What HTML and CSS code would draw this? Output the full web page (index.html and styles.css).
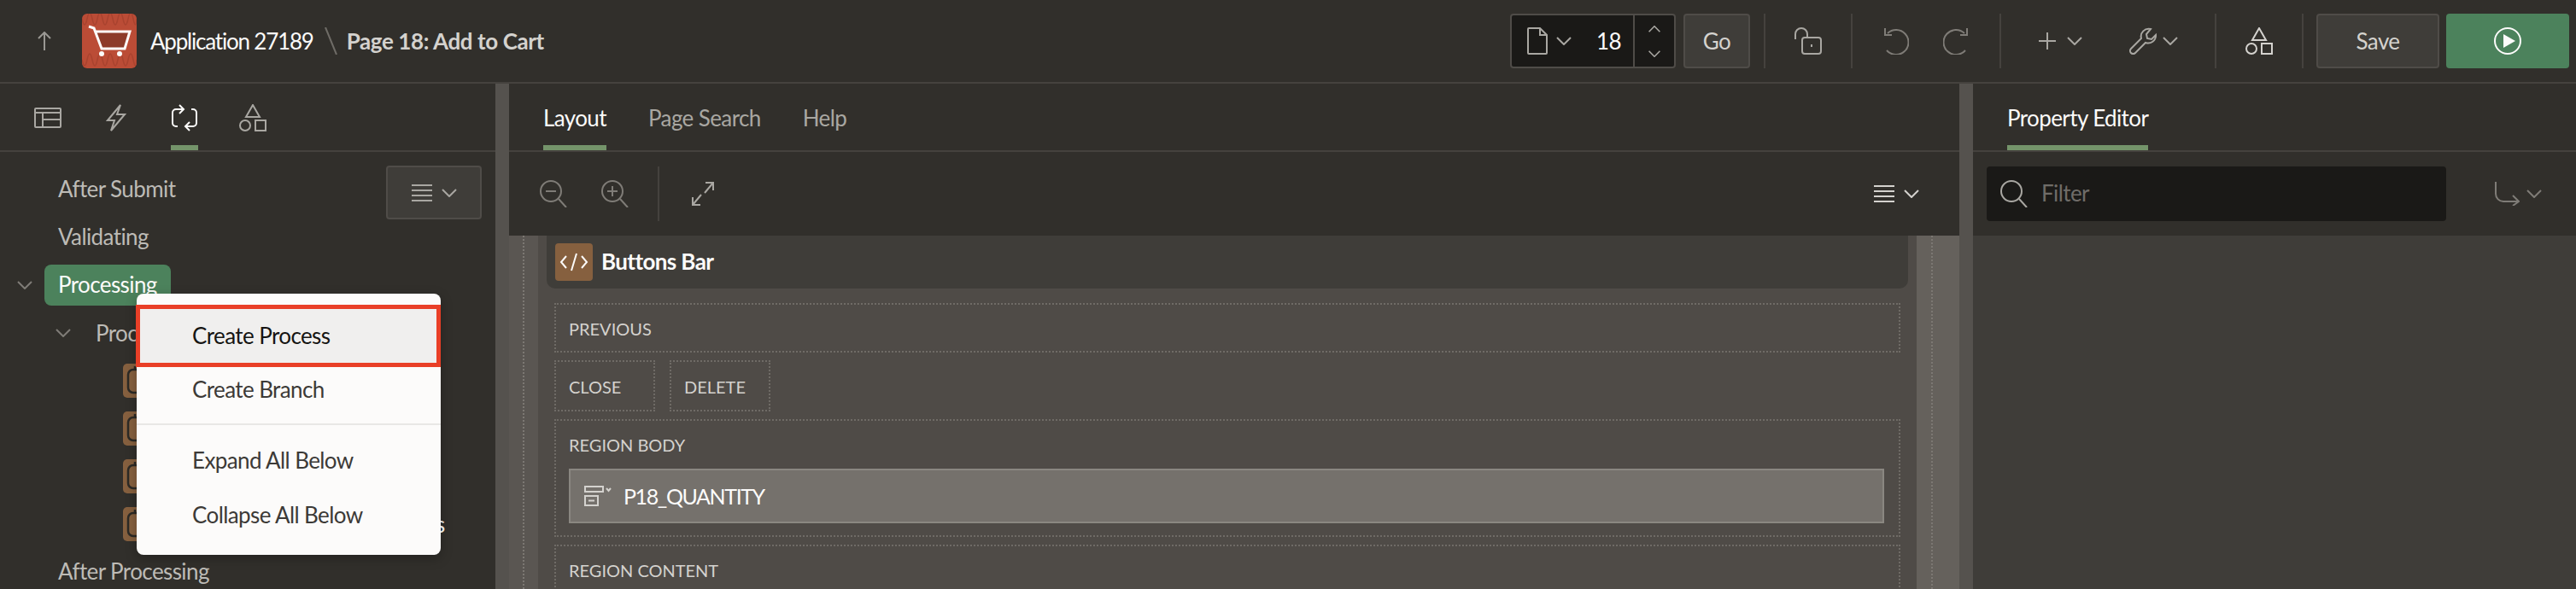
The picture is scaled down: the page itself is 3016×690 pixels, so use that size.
FILE: index.html
```html
<!DOCTYPE html>
<html lang="en">
<head>
    <meta charset="UTF-8">
    <title>Page Designer</title>
    <link rel="stylesheet" href="styles.css">
</head>
<body>
    <svg class="defs" width="0" height="0">
        <symbol id="chev" viewBox="0 0 18 10"><path d="M1 1l8 8 8-8"/></symbol>
        <symbol id="shapes" viewBox="0 0 32 32"><path d="M16 1l8 14H8z"/><circle cx="7" cy="25" r="6"/><rect x="19" y="19" width="12" height="12"/></symbol>
        <symbol id="lines" viewBox="0 0 24 20"><path d="M0 1h24M0 7h24M0 13h24M0 19h24"/></symbol>
        <symbol id="zoom" viewBox="0 0 32 32"><circle cx="13" cy="13" r="12"/><path d="M22 22l9 10"/></symbol>
    </svg>

    <header class="topbar">
        <svg class="back-arrow ic" width="16" height="22" viewBox="0 0 16 22"><path d="M8 22V1M1 8l7-7 7 7"/></svg>
        <div class="logo">
            <svg width="64" height="64" viewBox="0 0 64 64">
                <path class="logo-wave" d="M0 6q3 14 6 0t6 0 6 0 6 0 6 0 6 0 6 0 6 0 6 0 6 0 4 0M0 54q3 14 6 0t6 0 6 0 6 0 6 0 6 0 6 0 6 0 6 0 6 0 4 0"/>
                <path class="logo-fill" d="M16 21h40l-6 20H23z"/>
                <path class="logo-cart" d="M8 15l6 2 9 24h27l6-20H16"/>
                <circle class="logo-wheel" cx="23" cy="47" r="3"/>
                <circle class="logo-wheel" cx="44" cy="47" r="3"/>
            </svg>
        </div>
        <span class="app-name">Application 27189</span>
        <svg class="crumb-sep" width="15" height="32" viewBox="0 0 15 32"><path d="M1 0l13 32"/></svg>
        <span class="page-name">Page 18: Add to Cart</span>

        <div class="top-actions">
            <div class="page-box">
                <div class="page-pick">
                    <svg class="ic" width="24" height="32" viewBox="0 0 24 32"><path d="M1 2a1 1 0 0 1 1-1h13l8 8v21a1 1 0 0 1-1 1H2a1 1 0 0 1-1-1zM15 1v8h8"/></svg>
                    <svg class="ic chev-icon"><use href="#chev"/></svg>
                    <span class="page-num">18</span>
                </div>
                <div class="page-steps">
                    <svg class="ic step-icon" viewBox="0 0 18 10"><path d="M1 9l8-8 8 8"/></svg>
                    <svg class="ic step-icon"><use href="#chev"/></svg>
                </div>
            </div>
            <button class="btn go-btn">Go</button>
            <div class="tb-group lock-group">
                <svg class="ic" width="32" height="32" viewBox="0 0 32 32"><path d="M1 14V8a7 7 0 0 1 14 0v4"/><rect x="9" y="12" width="22" height="19" rx="3"/><path d="M20 20v3"/></svg>
            </div>
            <div class="tb-group history-group">
                <svg class="ic dim" width="30" height="32" viewBox="0 0 30 32"><path d="M5 7a14.500 14.500 0 1 1-1 20M2 1v8h8"/></svg>
                <svg class="ic dim" width="30" height="32" viewBox="0 0 30 32"><path d="M25 7a14.500 14.500 0 1 0 1 20M28 1v8h-8"/></svg>
            </div>
            <div class="tb-group tools-group">
                <div class="with-chev plus-pair">
                    <svg class="ic" width="20" height="20" viewBox="0 0 20 20"><path d="M10 0v20M0 10h20"/></svg>
                    <svg class="ic chev-icon"><use href="#chev"/></svg>
                </div>
                <div class="with-chev wrench-pair">
                    <svg class="ic" width="32" height="32" viewBox="0 0 32 32"><path d="M31 9l-5 5-5-1-1-5 5-6a9 9 0 0 0-11 11L2 25a3.500 3.500 0 0 0 5 5l12-12a9 9 0 0 0 12-9z"/></svg>
                    <svg class="ic chev-icon"><use href="#chev"/></svg>
                </div>
            </div>
            <div class="tb-group shapes-group">
                <svg class="ic" width="32" height="32"><use href="#shapes"/></svg>
            </div>
            <div class="tb-group save-group">
                <button class="btn save-btn">Save</button>
                <button class="run-btn">
                    <svg width="32" height="32" viewBox="0 0 32 32"><circle cx="16" cy="16" r="15"/><path class="play" d="M11 8l14 8-14 8z"/></svg>
                </button>
            </div>
        </div>
    </header>

    <main class="panes">
        <aside class="pane-left">
            <div class="tabs icon-tabs">
                <div class="tab icon-tab">
                    <svg class="ic" width="32" height="24" viewBox="0 0 32 24"><rect x="1" y="1" width="30" height="22" rx="1"/><path d="M1 6h30M10 6v17M10 14h21"/></svg>
                </div>
                <div class="tab icon-tab">
                    <svg class="ic" width="24" height="32" viewBox="0 0 24 32"><path d="M17 1L2 19h8L6 31l16-19h-9z"/></svg>
                </div>
                <div class="tab icon-tab is-active">
                    <svg class="ic bright" width="32" height="32" viewBox="0 0 32 32"><path d="M14 6H6a4 4 0 0 0-4 4v12a4 4 0 0 0 4 4h2M18 26h8a4 4 0 0 0 4-4V10a4 4 0 0 0-4-4h-2M10 1l5 5-5 5M22 21l-5 5 5 5"/></svg>
                </div>
                <div class="tab icon-tab shapes-tab">
                    <svg class="ic" width="32" height="32"><use href="#shapes"/></svg>
                </div>
            </div>

            <div class="tree-wrap">
                <button class="btn tree-menu-btn">
                    <svg class="ic" width="24" height="20"><use href="#lines"/></svg>
                    <svg class="ic chev-icon"><use href="#chev"/></svg>
                </button>
                <ul class="tree">
                    <li class="tree-row"><span class="node">After Submit</span></li>
                    <li class="tree-row"><span class="node">Validating</span></li>
                    <li class="tree-row">
                        <svg class="ic tree-chev chev-icon"><use href="#chev"/></svg>
                        <span class="node is-selected">Processing</span>
                    </li>
                    <li class="tree-row level-1">
                        <svg class="ic tree-chev chev-icon"><use href="#chev"/></svg>
                        <span class="node-plain">Processes</span>
                    </li>
                    <li class="tree-row level-2"><span class="chip"><svg width="40" height="40" viewBox="0 0 40 40"><rect x="6" y="7" width="28" height="27" rx="6"/><path d="M14 3v4"/></svg></span></li>
                    <li class="tree-row level-2"><span class="chip"><svg width="40" height="40" viewBox="0 0 40 40"><rect x="6" y="7" width="28" height="27" rx="6"/><path d="M14 3v4"/></svg></span></li>
                    <li class="tree-row level-2"><span class="chip"><svg width="40" height="40" viewBox="0 0 40 40"><rect x="6" y="7" width="28" height="27" rx="6"/><path d="M14 3v4"/></svg></span></li>
                    <li class="tree-row level-2"><span class="chip"><svg width="40" height="40" viewBox="0 0 40 40"><rect x="6" y="7" width="28" height="27" rx="6"/><path d="M14 3v4"/></svg></span><span class="peek">s</span></li>
                    <li class="tree-row"><span class="node">After Processing</span></li>
                </ul>
            </div>

            <div class="context-menu">
                <div class="menu-item is-current">Create Process</div>
                <div class="menu-item">Create Branch</div>
                <div class="menu-sep"></div>
                <div class="menu-item">Expand All Below</div>
                <div class="menu-item">Collapse All Below</div>
            </div>
        </aside>

        <section class="pane-center">
            <div class="tabs text-tabs">
                <div class="tab is-active">Layout</div>
                <div class="tab">Page Search</div>
                <div class="tab">Help</div>
            </div>
            <div class="layout-tools">
                <svg class="ic dim" width="32" height="32" viewBox="0 0 32 32"><use href="#zoom"/><path d="M7 13h12"/></svg>
                <svg class="ic dim" width="32" height="32" viewBox="0 0 32 32"><use href="#zoom"/><path d="M7 13h12M13 7v12"/></svg>
                <div class="tools-sep"></div>
                <svg class="ic" width="26" height="28" viewBox="0 0 26 28"><path d="M25 1L15 13M16 1h9v9M1 27l10-12M10 27H1v-9"/></svg>
                <div class="with-chev lines-pair">
                    <svg class="ic" width="24" height="20"><use href="#lines"/></svg>
                    <svg class="ic chev-icon"><use href="#chev"/></svg>
                </div>
            </div>
            <div class="canvas">
                <div class="strip strip-left"></div>
                <div class="canvas-body">
                    <div class="region-bar">
                        <span class="code-chip"><svg width="44" height="44" viewBox="0 0 44 44"><path d="M13 15l-6 7 6 7M31 15l6 7-6 7M25 12l-6 20"/></svg></span>
                        <span class="region-title">Buttons Bar</span>
                    </div>
                    <div class="slots">
                        <div class="slot slot-prev">PREVIOUS</div>
                        <div class="slot-row">
                            <div class="slot slot-small">CLOSE</div>
                            <div class="slot slot-small">DELETE</div>
                        </div>
                        <div class="slot slot-body">
                            <div class="slot-label">REGION BODY</div>
                            <div class="item-row">
                                <svg class="ic-light" width="32" height="24" viewBox="0 0 32 24"><rect x="1" y="1" width="21" height="6"/><rect x="1" y="12" width="15" height="11"/><path d="M5 17.500h7M26 3l2.500 3L31 3"/></svg>
                                <span class="item-name">P18_QUANTITY</span>
                            </div>
                        </div>
                        <div class="slot slot-content">REGION CONTENT</div>
                    </div>
                </div>
                <div class="strip strip-right"></div>
            </div>
        </section>

        <section class="pane-right">
            <div class="tabs prop-tabs">
                <div class="tab is-active">Property Editor</div>
            </div>
            <div class="prop-tools">
                <div class="filter-box">
                    <svg class="ic" width="32" height="32"><use href="#zoom"/></svg>
                    <span class="filter-text">Filter</span>
                </div>
                <div class="with-chev goto-pair">
                    <svg class="ic dim" width="29" height="28" viewBox="0 0 29 28"><path d="M1 0v14a9 9 0 0 0 9 9h18M21 16l7 7-7 5"/></svg>
                    <svg class="ic dim chev-icon"><use href="#chev"/></svg>
                </div>
            </div>
            <div class="prop-body"></div>
        </section>
    </main>
</body>
</html>
```

FILE: styles.css
```css
* {
    box-sizing: border-box;
}
html, body {
    margin: 0;
    padding: 0;
}
body {
    width: 3016px;
    height: 690px;
    overflow: hidden;
    background-color: #312f2b;
    color: #fcfbfa;
    font-family: 'Lato', 'Liberation Sans', sans-serif;
    font-size: 26px;
    letter-spacing: -0.6px;
}
.defs {
    position: absolute;
}
svg {
    display: block;
    flex-shrink: 0;
}
.ic {
    fill: none;
    stroke: #a9a7a2;
    stroke-width: 2;
}
.ic.dim {
    stroke: #7f7c77;
}
.ic.bright {
    stroke: #fcfbfa;
}
.chev-icon {
    width: 18px;
    height: 10px;
}
.with-chev {
    display: flex;
    align-items: center;
}
button {
    font-family: inherit;
    font-size: 26px;
    letter-spacing: inherit;
    padding: 0;
    cursor: pointer;
}
.btn {
    background-color: #3f3d39;
    border: 2px solid #4f4c48;
    border-radius: 4px;
    color: #d4d2ce;
}

/* top bar */
.topbar {
    display: flex;
    align-items: center;
    height: 98px;
    border-bottom: 2px solid #45423e;
    padding-bottom: 0;
}
.back-arrow {
    margin-left: 44px;
    stroke: #9a9893;
}
.logo {
    width: 64px;
    height: 64px;
    margin-left: 36px;
    border-radius: 6px;
    overflow: hidden;
    background-color: #bb4c36;
}
.logo-wave {
    fill: none;
    stroke: #a9432f;
    stroke-width: 1.500;
}
.logo-fill {
    fill: #8d3b2a;
}
.logo-cart {
    fill: none;
    stroke: #fcfbfa;
    stroke-width: 3;
}
.logo-wheel {
    fill: #fcfbfa;
}
.app-name {
    margin-left: 16px;
    letter-spacing: -1.2px;
}
.crumb-sep {
    margin-left: 13px;
    fill: none;
    stroke: #6f6c67;
    stroke-width: 2;
}
.page-name {
    margin-left: 11px;
    font-weight: 700;
    color: #d4d2ce;
    letter-spacing: -0.4px;
}
.top-actions {
    display: flex;
    align-items: center;
    margin-left: auto;
    padding-right: 8px;
}
.page-box {
    display: flex;
    width: 194px;
    height: 64px;
    background-color: #1a1917;
    border: 2px solid #4f4c48;
    border-radius: 4px;
}
.page-pick {
    display: flex;
    align-items: center;
    width: 144px;
    padding-left: 18px;
    border-right: 2px solid #4f4c48;
}
.page-pick .chev-icon {
    margin-left: 10px;
}
.page-num {
    margin-left: 29px;
}
.page-steps {
    display: flex;
    flex-direction: column;
    justify-content: center;
    align-items: center;
    gap: 21px;
    flex: 1;
}
.step-icon {
    width: 16px;
    height: 8px;
}
.go-btn {
    width: 78px;
    height: 64px;
    margin-left: 9px;
    margin-right: 16px;
}
.tb-group {
    display: flex;
    align-items: center;
    height: 64px;
    border-left: 2px solid #45423e;
}
.lock-group {
    padding: 0 34px;
}
.history-group {
    padding: 0 36px;
    gap: 40px;
}
.tools-group {
    padding: 0 43px 0 44px;
    gap: 55px;
}
.plus-pair {
    gap: 13px;
}
.wrench-pair {
    gap: 7px;
}
.shapes-group {
    padding: 0 34px;
}
.shapes-group .ic {
    stroke: #d4d2ce;
}
.save-group {
    padding-left: 15px;
    gap: 8px;
}
.save-btn {
    width: 144px;
    height: 64px;
}
.run-btn {
    display: flex;
    align-items: center;
    justify-content: center;
    width: 144px;
    height: 64px;
    background-color: #4c825c;
    border: none;
    border-radius: 4px;
    fill: none;
    stroke: #fcfbfa;
    stroke-width: 2;
}
.run-btn .play {
    fill: #fcfbfa;
    stroke: none;
}

/* panes */
.panes {
    display: flex;
    height: 592px;
}
.pane-left {
    position: relative;
    width: 580px;
}
.pane-center {
    display: flex;
    flex-direction: column;
    width: 1730px;
    border-left: 16px solid #55524e;
    border-right: 16px solid #55524e;
}
.pane-right {
    display: flex;
    flex-direction: column;
    flex: 1;
}
.tabs {
    display: flex;
    height: 80px;
    border-bottom: 2px solid #45423e;
    flex-shrink: 0;
}
.tab {
    display: flex;
    align-items: center;
    height: 78px;
    padding-top: 8px;
    border-bottom: 6px solid transparent;
    color: #a9a7a2;
}
.tab.is-active {
    border-bottom-color: #74946a;
    color: #fcfbfa;
}
.icon-tabs {
    padding-left: 40px;
    gap: 52px;
}
.shapes-tab {
    margin-left: -4px;
}
.text-tabs {
    padding-left: 40px;
    gap: 49px;
}
.prop-tabs {
    padding-left: 40px;
}

/* tree */
.tree-wrap {
    position: relative;
    padding-top: 16px;
}
.tree-menu-btn {
    position: absolute;
    top: 16px;
    left: 452px;
    display: flex;
    align-items: center;
    justify-content: center;
    gap: 11px;
    width: 112px;
    height: 63px;
}
.tree {
    list-style: none;
    margin: 0;
    padding: 0;
}
.tree-row {
    display: flex;
    align-items: center;
    height: 56px;
    padding-left: 52px;
    color: #bdbbb6;
}
.tree-chev {
    position: relative;
    margin-left: -32px;
    margin-right: 14px;
    stroke: #7f7c77;
}
.node {
    display: block;
    padding: 6px 16px 7px;
    line-height: 35px;
    border-radius: 8px;
}
.node.is-selected {
    background-color: #4c825c;
    color: #fcfbfa;
}
.level-1 {
    padding-left: 97px;
}
.node-plain {
    margin-left: -1px;
    padding-left: 16px;
}
.level-2 {
    padding-left: 144px;
}
.chip {
    display: block;
    width: 40px;
    height: 40px;
    border-radius: 5px;
    background-color: #86603f;
    fill: none;
    stroke: #2c2a26;
    stroke-width: 2.500;
}
.peek {
    margin-left: 326px;
    color: #fcfbfa;
}

/* context menu */
.context-menu {
    position: absolute;
    top: 246px;
    left: 160px;
    width: 356px;
    height: 306px;
    padding-top: 13px;
    background-color: #fcfbfa;
    border-radius: 8px;
    box-shadow: 0 4px 14px rgba(0,0,0,0.25);
    color: #3c3a37;
}
.menu-item {
    display: flex;
    align-items: center;
    height: 64px;
    padding-left: 65px;
}
.menu-item.is-current {
    height: 73px;
    margin-left: -1px;
    padding: 0 0 2px 61px;
    background-color: #f0efee;
    border: 5px solid #e93f27;
    color: #161513;
}
.menu-sep {
    height: 2px;
    margin: 12px 0 9px;
    background-color: #e8e7e5;
}
.menu-item.is-current + .menu-item {
    height: 54px;
    padding-bottom: 2px;
}

/* center */
.layout-tools {
    display: flex;
    align-items: center;
    height: 98px;
    padding: 0 47px 0 36px;
    gap: 40px;
    flex-shrink: 0;
}
.tools-sep {
    width: 2px;
    height: 64px;
    margin-left: -6px;
    background-color: #45423e;
}
.tools-sep + svg {
    margin-left: -2px;
}
.lines-pair {
    margin-left: auto;
    gap: 11px;
}
.lines-pair .ic {
    stroke: #d4d2ce;
}
.canvas {
    display: flex;
    flex: 1;
    background-color: #4f4b47;
    overflow: hidden;
}
.strip {
    flex-shrink: 0;
    border-left: 2px dotted #7c7873;
}
.strip-left {
    width: 18px;
    margin-left: 16px;
    background-color: #5a5652;
    box-shadow: -16px 0 0 #5a5652;
}
.strip-right {
    width: 33px;
    margin-left: 17px;
    background-color: #65615c;
    box-shadow: -17px 0 0 #65615c;
}
.canvas-body {
    flex: 1;
    padding: 0 10px;
}
.region-bar {
    display: flex;
    align-items: center;
    height: 62px;
    padding-left: 10px;
    background-color: #3f3d39;
    border-radius: 0 0 10px 10px;
}
.code-chip {
    width: 44px;
    height: 44px;
    border-radius: 4px;
    background-color: #86603f;
    fill: none;
    stroke: #fcfbfa;
    stroke-width: 2;
}
.region-title {
    margin-left: 10px;
    padding-bottom: 2px;
    font-weight: 700;
}
.slots {
    display: flex;
    flex-direction: column;
    gap: 9px;
    margin: 17px 9px 0;
    font-size: 20px;
    letter-spacing: 0;
    color: #d4d2ce;
}
.slot {
    padding-left: 15px;
    border: 2px dotted #6f6b66;
}
.slot-prev {
    height: 58px;
    line-height: 56px;
}
.slot-row {
    display: flex;
    gap: 17px;
}
.slot-small {
    width: 118px;
    height: 60px;
    line-height: 58px;
}
.slot-body {
    height: 138px;
}
.slot-label {
    line-height: 56px;
}
.item-row {
    display: flex;
    align-items: center;
    gap: 14px;
    width: 1540px;
    height: 64px;
    padding-left: 16px;
    background-color: #75716c;
    border: 2px solid #8a8781;
    color: #fcfbfa;
}
.item-name {
    font-size: 25px;
    letter-spacing: -1.4px;
}
.ic-light {
    fill: none;
    stroke: #d4d2ce;
    stroke-width: 2;
}
.slot-content {
    height: 90px;
    line-height: 56px;
}

/* property editor */
.prop-tools {
    display: flex;
    align-items: center;
    height: 98px;
    padding-left: 16px;
    flex-shrink: 0;
}
.filter-box {
    display: flex;
    align-items: center;
    width: 538px;
    height: 64px;
    padding-left: 16px;
    background-color: #1a1917;
    border-radius: 4px;
}
.filter-text {
    margin-left: 16px;
    padding-bottom: 2px;
    color: #6f6c68;
}
.goto-pair {
    margin-left: 57px;
    gap: 8px;
}
.prop-body {
    flex: 1;
    background-color: #3f3d39;
}
```
